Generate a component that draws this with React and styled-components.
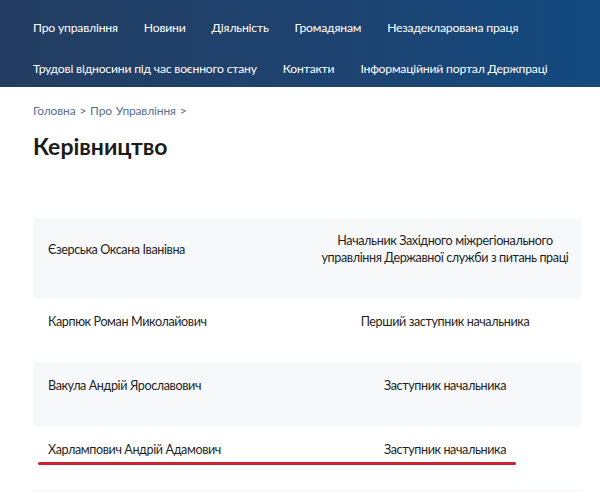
import React from 'react';
import styled, { createGlobalStyle } from 'styled-components';

const GlobalStyle = createGlobalStyle`
  body {
    margin: 0;
    background: #fff;
    font-family: Lato, "Open Sans", sans-serif;
    overflow: hidden;
  }
`;

const Header = styled.nav`
  background: linear-gradient(90deg, #233d61 0%, #1e4370 55%, #134a80 100%);
  padding: 7px 10px 0 33px;
  height: 80px;
  display: flex;
  flex-wrap: wrap;
  align-content: flex-start;
  column-gap: 26px;
`;

const NavLink = styled.a`
  color: #fff;
  font-size: 12.2px;
  letter-spacing: -0.2px;
  line-height: 41px;
  height: 41px;
  text-decoration: none;
  white-space: nowrap;
`;

const Main = styled.main`
  padding: 0 19px 0 33px;
`;

const Crumbs = styled.div`
  margin-top: 16px;
  font-size: 12px;
  letter-spacing: -0.15px;
  line-height: 16px;
  color: #5a7090;
  word-spacing: 1px;
`;

const Title = styled.h1`
  margin: 12px 0 0;
  font-size: 23px;
  line-height: 30px;
  font-weight: 700;
  color: #1b1b1b;
`;

const Table = styled.div`
  margin-top: 57px;
  display: flex;
  flex-direction: column;
`;

const Row = styled.div`
  position: relative;
  display: grid;
  grid-template-columns: 276px 272px;
  align-items: center;
  padding: 14px 0 32px;
  min-height: 17px;
  background: ${(p) => (p.$shaded ? '#f6f8fa' : '#fff')};
  font-size: 12.6px;
  letter-spacing: -0.4px;
  line-height: 17px;
  color: #1f1f1f;
  & + & {
    padding-top: 15px;
  }
`;

const Name = styled.div`
  padding-left: 15px;
`;

const Role = styled.div`
  text-align: center;
  padding: 0 12px;
`;

const Underline = styled.span`
  position: absolute;
  left: 5px;
  top: 36px;
  width: 478px;
  height: 3px;
  border-radius: 2px;
  background: #cf2130;
`;

const people = [
  ['Єзерська Оксана Іванівна', 'Начальник Західного міжрегіонального управління Державної служби з питань праці'],
  ['Карпюк Роман Миколайович', 'Перший заступник начальника'],
  ['Вакула Андрій Ярославович', 'Заступник начальника'],
  ['Харлампович Андрій Адамович', 'Заступник начальника', true],
  ['', ''],
];

export default function App() {
  return (
    <>
      <GlobalStyle />
      <Header>
        <NavLink>Про управління</NavLink>
        <NavLink>Новини</NavLink>
        <NavLink>Діяльність</NavLink>
        <NavLink>Громадянам</NavLink>
        <NavLink>Незадекларована праця</NavLink>
        <NavLink>Трудові відносини під час воєнного стану</NavLink>
        <NavLink>Контакти</NavLink>
        <NavLink>Інформаційний портал Держпраці</NavLink>
      </Header>
      <Main>
        <Crumbs>Головна &gt; Про Управління &gt;</Crumbs>
        <Title>Керівництво</Title>
        <Table>
          {people.map(([name, role, marked], i) => (
            <Row key={i} $shaded={i % 2 === 0}>
              <Name>{name}</Name>
              <Role>{role}</Role>
              {marked && <Underline />}
            </Row>
          ))}
        </Table>
      </Main>
    </>
  );
}
